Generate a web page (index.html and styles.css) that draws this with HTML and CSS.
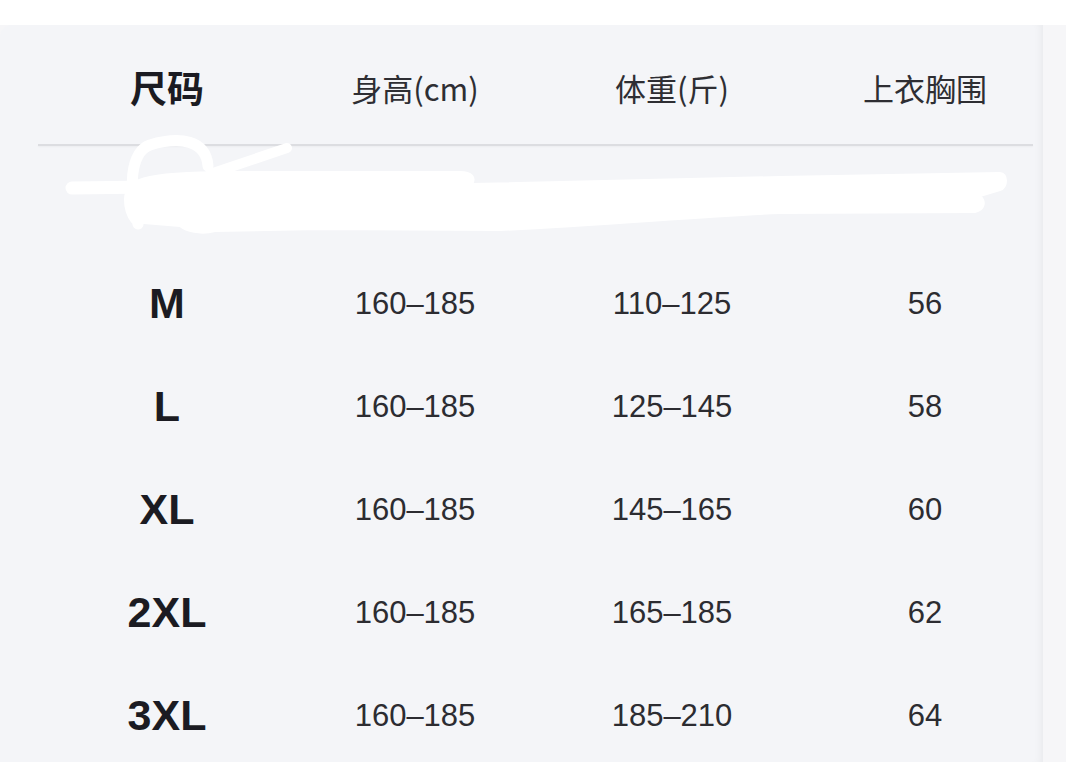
FILE: index.html
```html
<!DOCTYPE html>
<html lang="zh">
<head>
<meta charset="utf-8">
<title>尺码表</title>
<link rel="stylesheet" href="styles.css">
</head>
<body>
<div class="page">
  <div class="sheet">
    <div class="card">
      <div class="row head">
        <div class="hd hd-main">尺码</div>
        <div class="hd">身高(cm)</div>
        <div class="hd">体重(斤)</div>
        <div class="hd">上衣胸围</div>
      </div>
      <div class="divider"></div>
      <div class="row hidden-row"></div>
      <div class="row">
        <div class="size">M</div>
        <div class="num">160–185</div>
        <div class="num">110–125</div>
        <div class="num">56</div>
      </div>
      <div class="row">
        <div class="size">L</div>
        <div class="num">160–185</div>
        <div class="num">125–145</div>
        <div class="num">58</div>
      </div>
      <div class="row">
        <div class="size">XL</div>
        <div class="num">160–185</div>
        <div class="num">145–165</div>
        <div class="num">60</div>
      </div>
      <div class="row">
        <div class="size">2XL</div>
        <div class="num">160–185</div>
        <div class="num">165–185</div>
        <div class="num">62</div>
      </div>
      <div class="row">
        <div class="size">3XL</div>
        <div class="num">160–185</div>
        <div class="num">185–210</div>
        <div class="num">64</div>
      </div>
      <svg class="scribble" width="1037" height="260" viewBox="0 25 1037 260" fill="none" stroke="#ffffff" stroke-linecap="round" stroke-linejoin="round">
        <path d="M125 200 C125 180 140 172 230 172 L460 172 C472 172 476 178 472 184 L780 177 L1000 173 C1008 173 1008 188 1000 190 L980 196 C986 201 985 210 975 212 L780 213 C700 216 600 226 500 230 L320 229 L215 231 C200 235 186 231 180 226 L132 222 C126 214 125 206 125 200 Z" fill="#ffffff" stroke-width="2"/>
        <path d="M72 188 L230 186" stroke-width="13"/>
        <path d="M138 224 C128 190 130 152 150 145 C180 136 206 140 208 166" stroke-width="11"/>
        <path d="M210 174 L287 148" stroke-width="10"/>
      </svg>
    </div>
    <div class="edge"></div>
  </div>
</div>
</body>
</html>
```
FILE: styles.css
```css
html, body {
  margin: 0;
  padding: 0;
}

body {
  background: #ffffff;
  font-family: "Liberation Sans", "Noto Sans CJK SC", sans-serif;
}

.page {
  height: 762px;
  padding-top: 25px;
  box-sizing: border-box;
  overflow: hidden;
}

.sheet {
  display: flex;
  height: 737px;
  background: #f6f6f8;
}

.card {
  position: relative;
  flex: 0 0 1037px;
  padding-top: 15px;
  box-sizing: border-box;
  background: #f4f5f8;
  border-top-left-radius: 12px;
  box-shadow: inset -8px 0 8px -6px rgba(0, 0, 0, 0.05);
}

.edge {
  flex: 1;
}

.row {
  display: grid;
  grid-template-columns: 252px 244px 270px 236px;
  padding-left: 41px;
  height: 103px;
  align-items: center;
  justify-items: center;
}

.head {
  height: 94px;
  padding-bottom: 6px;
}

.divider {
  height: 2px;
  margin: 4px 10px 2.5px 38px;
  background: #dcdde1;
  box-shadow: 0 1px 2px rgba(0, 0, 0, 0.04);
}

.hd {
  font-family: "Noto Sans CJK SC", sans-serif;
  font-size: 31px;
  line-height: 1;
  color: #2e2e33;
}

.hd-main {
  font-size: 37px;
  font-weight: 700;
  color: #1b1b22;
}

.size {
  font-size: 43px;
  font-weight: 700;
  line-height: 1;
  color: #1b1b22;
}

.num {
  font-size: 31px;
  line-height: 1;
  color: #2c2c31;
}

.scribble {
  position: absolute;
  left: 0;
  top: 0;
  pointer-events: none;
}
```
